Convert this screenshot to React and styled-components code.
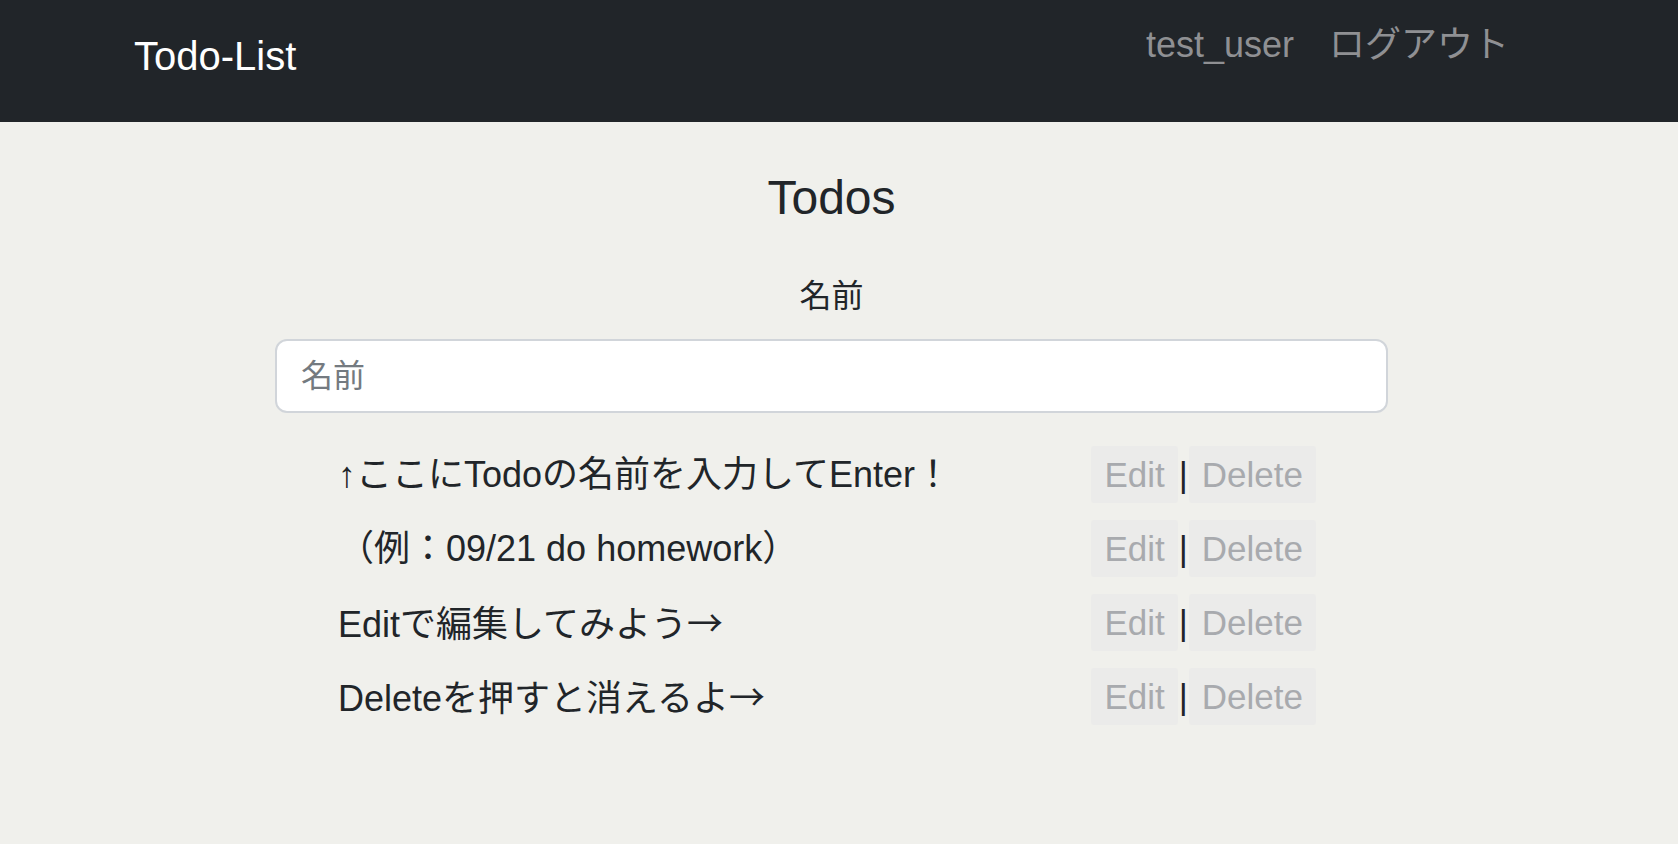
import React from 'react';
import styled, {createGlobalStyle} from 'styled-components';

const GlobalStyle = createGlobalStyle`
    html, body {
        margin: 0;
        padding: 0;
        background-color: #f0f0ec;
        font-family: "Liberation Sans", "Noto Sans CJK JP", sans-serif;
        color: #212529;
    }
`;

const Page = styled.div`
    min-height: 844px;
    background-color: #f0f0ec;
`;

const NavBar = styled.nav`
    display: flex;
    justify-content: space-between;
    align-items: flex-start;
    height: 122px;
    box-sizing: border-box;
    padding: 0 169px 0 134px;
    background-color: #212529;
`;

const Brand = styled.a`
    margin-top: 36px;
    font-size: 40px;
    line-height: 1;
    color: #ffffff;
    text-decoration: none;
`;

const NavLinks = styled.div`
    display: flex;
    gap: 35px;
    margin-top: 27px;
`;

const NavLink = styled.a`
    font-size: 36px;
    line-height: 1;
    color: #8f9093;
    text-decoration: none;
`;

const Main = styled.main`
    display: flex;
    flex-direction: column;
    align-items: center;
    padding-left: 275px;
    padding-right: 290px;
`;

const Title = styled.h1`
    margin: 52px 0 0 0;
    font-size: 48px;
    font-weight: 400;
    line-height: 1;
`;

const Label = styled.label`
    margin-top: 58px;
    font-size: 32px;
    line-height: 1;
`;

const NameInput = styled.input`
    box-sizing: border-box;
    width: 100%;
    height: 74px;
    margin-top: 27px;
    padding: 0 24px;
    border: 2px solid #d1d5da;
    border-radius: 12px;
    background-color: #ffffff;
    font-family: "Liberation Sans", "Noto Sans CJK JP", sans-serif;
    font-size: 32px;
    color: #212529;
    outline: none;

    &::placeholder {
        color: #747a80;
    }
`;

const TodoList = styled.ul`
    display: flex;
    flex-direction: column;
    gap: 17px;
    align-self: stretch;
    margin: 33px 0 0 0;
    padding: 0 72px 0 63px;
    list-style: none;
`;

const TodoRow = styled.li`
    display: flex;
    justify-content: space-between;
    align-items: center;
    height: 57px;
`;

const TodoName = styled.span`
    font-size: 36px;
    line-height: 1;
    color: #212529;
`;

// the right arrow is full width in the original (Japanese font)
const Arrow = styled.span`
    font-family: "Noto Sans CJK JP", sans-serif;
`;

const Actions = styled.div`
    display: flex;
    align-items: center;
    font-size: 35px;
    line-height: 1;
    color: #212529;
`;

const ActionButton = styled.button`
    height: 57px;
    padding: 0 13px;
    border: none;
    border-radius: 3px;
    background-color: #ebebea;
    font-family: "Liberation Sans", sans-serif;
    font-size: 35px;
    color: #a8aaae;
    cursor: pointer;
`;

const Separator = styled.span`
    padding: 0 1px;
`;

const todos = [
    '↑ここにTodoの名前を入力してEnter！',
    '（例：09/21 do homework）',
    'Editで編集してみよう→',
    'Deleteを押すと消えるよ→',
];

const renderName = (text) => text.split(/(→)/).map((part, i) =>
    part === '→' ? <Arrow key={i}>{part}</Arrow> : part
);

const App = () => {
    const list = todos.map(function (item) {
        return <TodoRow key={item}>
            <TodoName>{renderName(item)}</TodoName>
            <Actions>
                <ActionButton>Edit</ActionButton>
                <Separator>|</Separator>
                <ActionButton>Delete</ActionButton>
            </Actions>
        </TodoRow>;
    });

    return (
        <Page>
            <GlobalStyle/>
            <NavBar>
                <Brand href="#">Todo-List</Brand>
                <NavLinks>
                    <NavLink href="#">test_user</NavLink>
                    <NavLink href="#">ログアウト</NavLink>
                </NavLinks>
            </NavBar>
            <Main>
                <Title>Todos</Title>
                <Label htmlFor="name">名前</Label>
                <NameInput id="name" placeholder="名前"/>
                <TodoList>
                    {list}
                </TodoList>
            </Main>
        </Page>
    )
};

export default App;
